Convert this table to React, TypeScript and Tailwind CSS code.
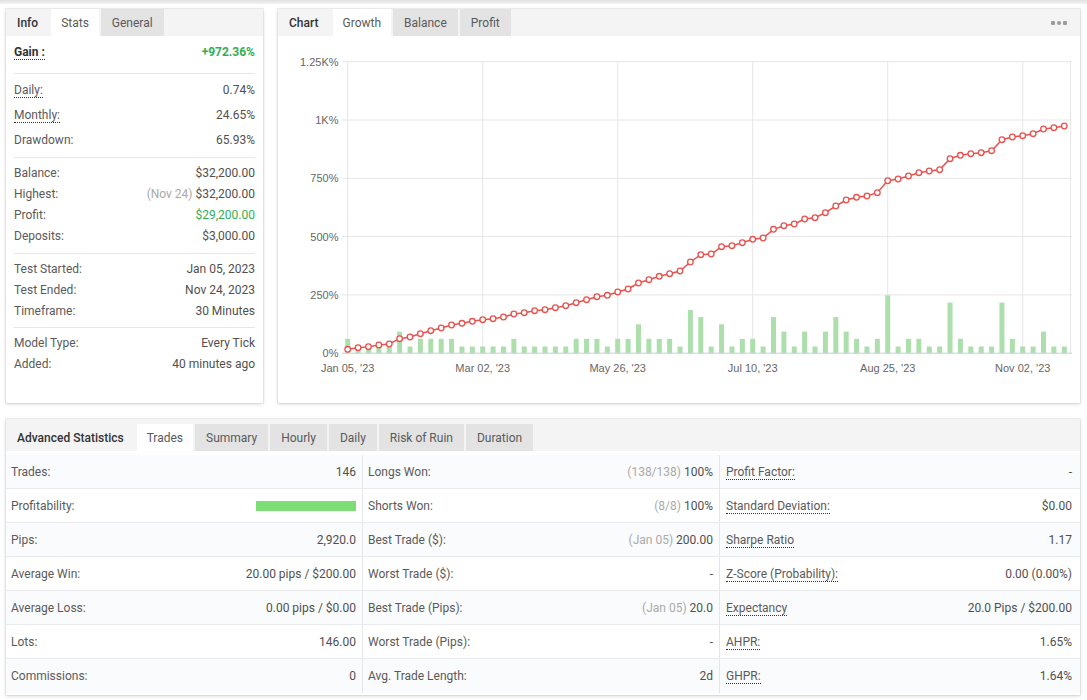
import React from 'react';

const ys = [349.3,347.7,346.7,345,344,338.7,337,333.7,330.7,328,325,323.3,321.3,319.7,318.7,317,314,312.7,310.7,309.7,307.7,305.7,302.7,299.7,296.7,295.3,292,289,283,279.7,276.3,273.7,271,262,254.7,254,246.7,245.7,242.7,239.3,238,229.3,225.7,224,219,217.7,212.7,206,200,197.3,196,192.7,180.7,179,176,172.7,171,169.7,158.7,155.3,153.7,152.7,150.7,139.7,137,135.7,133.7,129,127.7,126];
const units = [2,1,1,1,1,3,1,2,2,2,2,1,1,1,1,1,2,1,1,1,1,1,2,2,2,1,2,2,4,2,2,2,1,6,5,1,4,1,2,2,1,5,3,1,3,1,3,5,3,2,1,2,8,1,2,2,1,1,7,2,1,1,1,7,2,1,1,3,1,1];
const xOf = (i: number) => 347.7 + i * 10.385;

function Chart() {
  const base = 353.3;
  const yLabels = ['1.25K%', '1K%', '750%', '500%', '250%', '0%'];
  const xLabels = ["Jan 05, '23", "Mar 02, '23", "May 26, '23", "Jul 10, '23", "Aug 25, '23", "Nov 02, '23"];
  const pts = ys.map((y, i) => `${xOf(i).toFixed(1)},${y}`).join(' ');
  return (
    <svg width="802" height="367" viewBox="278 36 802 367" className="block">
      {yLabels.map((l, k) => (
        <line key={'h' + k} x1="342" x2="1072" y1={61.7 + k * 58.3} y2={61.7 + k * 58.3} stroke="#e6e6e6" strokeWidth="1" />
      ))}
      {[0, 13, 26, 39, 52, 65].map((i) => (
        <line key={'v' + i} x1={xOf(i)} x2={xOf(i)} y1="61.7" y2={base} stroke="#e6e6e6" strokeWidth="1" />
      ))}
      <line x1="1070.5" x2="1070.5" y1="61.7" y2={base} stroke="#e6e6e6" strokeWidth="1" />
      {units.map((u, i) => {
        const h = u === 1 ? 6.8 : u * 7.25;
        return <rect key={'b' + i} x={xOf(i) - 2.5} y={base - h} width="5" height={h} fill="#addfad" />;
      })}
      <line x1="342" x2="1072" y1={base} y2={base} stroke="#ccd6eb" strokeWidth="1" />
      <polyline points={pts} fill="none" stroke="#e8524e" strokeWidth="1.5" />
      {ys.map((y, i) => (
        <circle key={'c' + i} cx={xOf(i)} cy={y} r="2.8" fill="#ffffff" stroke="#e8524e" strokeWidth="1.3" />
      ))}
      {yLabels.map((l, k) => (
        <text key={'yl' + k} x="338.5" y={61.7 + k * 58.3 + 4} textAnchor="end" fontSize="11" fill="#666666" fontFamily="Liberation Sans, Arial, sans-serif">{l}</text>
      ))}
      {xLabels.map((l, k) => (
        <text key={'xl' + k} x={xOf(k * 13)} y="372.3" textAnchor="middle" fontSize="11" fill="#666666" fontFamily="Liberation Sans, Arial, sans-serif">{l}</text>
      ))}
    </svg>
  );
}

function U({ children, bold }: { children: React.ReactNode; bold?: boolean }) {
  return (
    <span className={bold ? 'inline-block leading-[14px] border-b border-dotted border-[#333] font-bold text-[#333]' : 'inline-block leading-[14px] border-b border-dotted border-[#333]'}>
      {children}
    </span>
  );
}

function Row({ h, label, value }: { h: string; label: React.ReactNode; value: React.ReactNode }) {
  return (
    <div className={`flex items-center justify-between ${h}`}>
      <div className="text-[#5a5a5a]">{label}</div>
      <div className="text-[#505050]">{value}</div>
    </div>
  );
}

function Tab({ label, active }: { label: string; active?: boolean }) {
  return (
    <div className={active ? 'h-full flex items-center px-[10px] bg-white text-[#5a5a5a]' : 'h-full flex items-center px-[11px] bg-[#e3e3e3] text-[#5a5a5a]'}>
      {label}
    </div>
  );
}

const panel = 'bg-white shadow-[0_0_0_1px_rgba(0,0,0,0.05),0_1px_4px_rgba(0,0,0,0.16)]';

const gray = (t: string) => <span className="text-[#aaa]">{t} </span>;

type Cell = { l: React.ReactNode; v: React.ReactNode };
const rows: Cell[][] = [
  [
    { l: 'Trades:', v: '146' },
    { l: 'Longs Won:', v: <>{gray('(138/138)')}100%</> },
    { l: <U>Profit Factor:</U>, v: '-' },
  ],
  [
    { l: 'Profitability:', v: <div className="w-[100px] h-[10px] bg-[#7ddd76]" /> },
    { l: 'Shorts Won:', v: <>{gray('(8/8)')}100%</> },
    { l: <U>Standard Deviation:</U>, v: '$0.00' },
  ],
  [
    { l: 'Pips:', v: '2,920.0' },
    { l: 'Best Trade ($):', v: <>{gray('(Jan 05)')}200.00</> },
    { l: <U>Sharpe Ratio</U>, v: '1.17' },
  ],
  [
    { l: 'Average Win:', v: '20.00 pips / $200.00' },
    { l: 'Worst Trade ($):', v: '-' },
    { l: <U>Z-Score (Probability):</U>, v: '0.00 (0.00%)' },
  ],
  [
    { l: 'Average Loss:', v: '0.00 pips / $0.00' },
    { l: 'Best Trade (Pips):', v: <>{gray('(Jan 05)')}20.0</> },
    { l: <U>Expectancy</U>, v: '20.0 Pips / $200.00' },
  ],
  [
    { l: 'Lots:', v: '146.00' },
    { l: 'Worst Trade (Pips):', v: '-' },
    { l: <U>AHPR:</U>, v: '1.65%' },
  ],
  [
    { l: 'Commissions:', v: '0' },
    { l: 'Avg. Trade Length:', v: '2d' },
    { l: <U>GHPR:</U>, v: '1.64%' },
  ],
];

export default function App() {
  return (
    <div className="w-[1087px] h-[700px] overflow-hidden bg-white font-[Roboto,sans-serif] text-[12px]">
      <div className="h-[4px] bg-gradient-to-b from-[#e0e0e0] to-[#f3f3f3]" />
      <div className="flex pl-[6px] pt-[5px] gap-[15px]">
        {/* Left stats panel */}
        <div className={`w-[257px] h-[394px] ${panel}`}>
          <div className="flex h-[27px] bg-[#f4f4f4] gap-[2px]">
            <div className="h-full flex items-center px-[11px] font-medium text-[#333]">Info</div>
            <Tab label="Stats" active />
            <Tab label="General" />
          </div>
          <div className="mx-[8px] pt-[5px] pb-[10px] border-b border-[#e6e6e6]">
            <Row h="h-[22px]" label={<U bold>Gain :</U>} value={<span className="font-bold text-[#2fae57]">+972.36%</span>} />
          </div>
          <div className="mx-[8px] pt-[3px] pb-[5px] border-b border-[#e6e6e6]">
            <Row h="h-[25px]" label={<U>Daily:</U>} value="0.74%" />
            <Row h="h-[25px]" label={<U>Monthly:</U>} value="24.65%" />
            <Row h="h-[25px]" label="Drawdown:" value="65.93%" />
          </div>
          <div className="mx-[8px] pt-[4px] pb-[7px] border-b border-[#e6e6e6]">
            <Row h="h-[21px]" label="Balance:" value="$32,200.00" />
            <Row h="h-[21px]" label="Highest:" value={<>{gray('(Nov 24)')}$32,200.00</>} />
            <Row h="h-[21px]" label="Profit:" value={<span className="text-[#2fae57]">$29,200.00</span>} />
            <Row h="h-[21px]" label="Deposits:" value="$3,000.00" />
          </div>
          <div className="mx-[8px] pt-[4px] pb-[6px] border-b border-[#e6e6e6]">
            <Row h="h-[21px]" label="Test Started:" value="Jan 05, 2023" />
            <Row h="h-[21px]" label="Test Ended:" value="Nov 24, 2023" />
            <Row h="h-[21px]" label="Timeframe:" value="30 Minutes" />
          </div>
          <div className="mx-[8px] pt-[4px]">
            <Row h="h-[21px]" label="Model Type:" value="Every Tick" />
            <Row h="h-[21px]" label="Added:" value="40 minutes ago" />
          </div>
        </div>

        {/* Chart panel */}
        <div className={`w-[802px] h-[394px] ${panel}`}>
          <div className="flex h-[27px] bg-[#f4f4f4] gap-[2px]">
            <div className="h-full flex items-center pl-[11px] pr-[12px] font-medium text-[#333]">Chart</div>
            <Tab label="Growth" active />
            <Tab label="Balance" />
            <Tab label="Profit" />
            <div className="ml-auto mr-[13px] flex items-center">
              <svg width="16" height="6" viewBox="0 0 16 6">
                <rect x="0" y="1" width="4" height="4" rx="1" fill="#9c9c9c" />
                <circle cx="8" cy="3" r="2.1" fill="#9c9c9c" />
                <rect x="12" y="1" width="4" height="4" rx="1" fill="#9c9c9c" />
              </svg>
            </div>
          </div>
          <Chart />
        </div>
      </div>

      {/* Advanced statistics */}
      <div className={`ml-[6px] mt-[16px] w-[1074px] h-[276px] ${panel}`}>
        <div className="flex h-[32px] pt-[5px] bg-[#f4f4f4] gap-[2px]">
          <div className="h-full flex items-center px-[11px] font-medium text-[#333]">Advanced Statistics</div>
          <Tab label="Trades" active />
          <Tab label="Summary" />
          <Tab label="Hourly" />
          <Tab label="Daily" />
          <Tab label="Risk of Ruin" />
          <Tab label="Duration" />
        </div>
        <div className="mt-[4px]">
          {rows.map((r, i) => (
            <div
              key={i}
              className={`grid grid-cols-[356px_357px_361px] h-[34px] ${i % 2 === 0 ? 'bg-[#fafbfc]' : 'bg-white'} ${i < rows.length - 1 ? 'border-b border-[#e8eaed]' : ''}`}
            >
              <div className="flex items-center justify-between pl-[5px] pr-[6px]">
                <div className="text-[#5a5a5a]">{r[0].l}</div>
                <div className="text-[#505050] flex items-center">{r[0].v}</div>
              </div>
              <div className="flex items-center justify-between pl-[5px] pr-[6px] border-l border-[#e3e6ea]">
                <div className="text-[#5a5a5a]">{r[1].l}</div>
                <div className="text-[#505050]">{r[1].v}</div>
              </div>
              <div className="flex items-center justify-between pl-[6px] pr-[8px] border-l border-[#e3e6ea]">
                <div className="text-[#5a5a5a]">{r[2].l}</div>
                <div className="text-[#505050]">{r[2].v}</div>
              </div>
            </div>
          ))}
        </div>
      </div>
    </div>
  );
}
